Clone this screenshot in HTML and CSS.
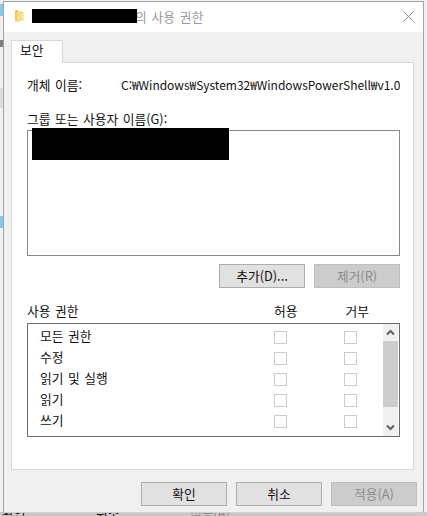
FILE: index.html
```html
<!DOCTYPE html>
<html lang="ko">
<head>
<meta charset="utf-8">
<title>사용 권한</title>
<link rel="stylesheet" href="styles.css">
</head>
<body>
<div class="desktop">
  <div class="behind behind-a"></div>
  <div class="behind behind-b"></div>
  <div class="behind behind-c"></div>
  <div class="behind behind-d"></div>
  <div class="behind-strip">
    <span class="bs bs-1">확인</span>
    <span class="bs bs-2">취소</span>
    <span class="bs bs-3">적용(A)</span>
  </div>
  <div class="window">
    <header class="titlebar">
      <svg class="folder" width="9" height="13" viewBox="0 0 9 13"><path d="M0 0h3l1 2h3v9H0z" fill="#f0c965"/><path d="M2 2.500l5-2v10l-5 2.500z" fill="#f8dc8e"/><path d="M7 2h2v9H7z" fill="#fbe8b0"/></svg>
      <span class="title-wrap"><span class="redact-title"></span><span class="title-text">의 사용 권한</span></span>
      <svg class="close" width="11" height="11" viewBox="0 0 11 11"><path d="M.5.500l10 10M10.500.500l-10 10" stroke="#8a8a8a" fill="none"/></svg>
    </header>
    <div class="body">
      <div class="tabs"><div class="tab">보안</div></div>
      <section class="panel">
        <div class="object-row">
          <span class="object-label">개체 이름:</span>
          <span class="object-path">C:₩Windows₩System32₩WindowsPowerShell₩v1.0</span>
        </div>
        <div class="group-label">그룹 또는 사용자 이름(G):</div>
        <div class="group-list"><div class="redact-user"></div></div>
        <div class="btn-row">
          <button class="btn">추가(D)...</button>
          <button class="btn disabled">제거(R)</button>
        </div>
        <div class="perm-head">
          <span class="perm-title">사용 권한</span>
          <span class="perm-col">허용</span>
          <span class="perm-col">거부</span>
        </div>
        <div class="perm-list">
          <div class="perm-rows">
            <div class="perm-row"><span class="perm-name">모든 권한</span><i class="check"></i><i class="check"></i></div>
            <div class="perm-row"><span class="perm-name">수정</span><i class="check"></i><i class="check"></i></div>
            <div class="perm-row"><span class="perm-name">읽기 및 실행</span><i class="check"></i><i class="check"></i></div>
            <div class="perm-row"><span class="perm-name">읽기</span><i class="check"></i><i class="check"></i></div>
            <div class="perm-row"><span class="perm-name">쓰기</span><i class="check"></i><i class="check"></i></div>
          </div>
          <div class="scrollbar">
            <div class="sb-btn"><svg width="9" height="7" viewBox="0 0 9 7"><path d="M1 5.500l3.500-3.500 3.500 3.500" stroke="#606060" stroke-width="2" fill="none"/></svg></div>
            <div class="sb-thumb"></div>
            <div class="sb-btn"><svg width="9" height="7" viewBox="0 0 9 7"><path d="M1 1.500l3.500 3.500 3.500-3.500" stroke="#606060" stroke-width="2" fill="none"/></svg></div>
          </div>
        </div>
      </section>
      <footer class="footer">
        <button class="btn">확인</button>
        <button class="btn">취소</button>
        <button class="btn disabled">적용(A)</button>
      </footer>
    </div>
  </div>
</div>
</body>
</html>
```

FILE: styles.css
```css
* { box-sizing: border-box; }
html, body { margin: 0; padding: 0; }
body {
  width: 427px;
  height: 516px;
  overflow: hidden;
  background: #f0f0f0;
  font-family: "Noto Sans CJK KR", "Noto Sans", sans-serif;
  font-size: 12.75px;
  word-spacing: 1px;
  color: #111;
}
.desktop {
  position: relative;
  width: 427px;
  height: 516px;
  overflow: hidden;
  padding: 1px 3px 0;
}
.behind { position: absolute; left: 0; width: 3px; }
.behind-a { top: 4px; height: 12px; background: #8cc6e8; }
.behind-b { top: 40px; height: 7px; background: #333; opacity: .6; }
.behind-c { top: 88px; height: 20px; background: #dcdcdc; }
.behind-d { top: 216px; height: 12px; background: #8cc6e8; }
.behind-strip {
  position: absolute;
  left: 0;
  bottom: 0;
  width: 427px;
  height: 4px;
  background: #c9c9c9;
  overflow: hidden;
}
.bs { position: absolute; top: -6px; font-size: 12.75px; line-height: 14px; }
.bs-1 { left: 2px; }
.bs-2 { left: 96px; }
.bs-3 { left: 190px; color: #8a8a8a; }
.window {
  position: relative;
  display: flex;
  flex-direction: column;
  width: 421px;
  height: 512px;
  background: #f0f0f0;
  border: 1px solid #a3a3a3;
  border-bottom-color: #d0d0d0;
}
.titlebar {
  display: flex;
  align-items: center;
  height: 30px;
  padding: 0 9px 2px 11px;
  background: #fff;
  flex: none;
}
.folder { flex: none; }
.title-wrap {
  display: flex;
  align-items: center;
  margin-left: 8px;
  flex: 1;
  color: #9a9a9a;
}
.redact-title { position: relative; z-index: 1; width: 105px; height: 14px; background: #000; }
.title-text { letter-spacing: .1px; margin-left: -2px; }
.close { flex: none; }
.body {
  flex: 1;
  display: flex;
  flex-direction: column;
  padding: 8px 9px 0 7px;
  background: #f0f0f0;
}
.tabs { display: flex; height: 23px; flex: none; position: relative; z-index: 1; }
.tab {
  width: 52px;
  height: 23px;
  padding: 1px 0 0 8px;
  line-height: 16px;
  background: #fff;
  border: 1px solid #d9d9d9;
  border-bottom: 0;
}
.panel {
  height: 408px;
  margin-top: -1px;
  padding: 14px 13px 0 15px;
  background: #fff;
  border: 1px solid #d9d9d9;
  flex: none;
}
.object-row { display: flex; height: 16px; line-height: 16px; white-space: nowrap; overflow: hidden; }
.object-label { width: 94px; flex: none; }
.object-path { font-size: 12px; letter-spacing: -.02px; }
.group-label { margin-top: 18px; height: 16px; line-height: 16px; }
.group-list {
  position: relative;
  height: 126px;
  margin-top: 3px;
  background: #fff;
  border: 1px solid #828790;
}
.redact-user {
  position: absolute;
  left: 4px;
  top: -3px;
  width: 197px;
  height: 32px;
  background: #000;
}
.btn {
  display: block;
  width: 86px;
  height: 24px;
  padding: 0;
  font: inherit;
  line-height: 20px;
  color: #111;
  background: #e1e1e1;
  border: 1px solid #adadad;
  border-radius: 0;
}
.btn.disabled { background: #cccccc; border-color: #bfbfbf; color: #8c8c8c; }
.btn-row { display: flex; justify-content: flex-end; gap: 9px; margin-top: 8px; }
.perm-head { display: flex; margin-top: 15px; height: 16px; line-height: 16px; }
.perm-title { width: 247px; flex: none; }
.perm-col { width: 71.500px; flex: none; }
.perm-list {
  display: flex;
  height: 114px;
  margin-top: 4px;
  background: #fff;
  border: 1px solid #6e6e6e;
}
.perm-rows { flex: 1; min-width: 0; padding: 3px 0 0 12px; }
.perm-row { display: flex; align-items: center; height: 21px; line-height: 16px; }
.perm-name { width: 234px; flex: none; margin-bottom: 3px; }
.check {
  display: block;
  width: 13px;
  height: 13px;
  margin-right: 57px;
  background: #fff;
  border: 1px solid #cccccc;
  flex: none;
}
.check:last-child { margin-right: 0; }
.scrollbar {
  width: 15px;
  margin-right: 1px;
  display: flex;
  flex-direction: column;
  background: #f0f0f0;
  flex: none;
}
.sb-btn { height: 17px; display: flex; align-items: center; justify-content: center; flex: none; }
.sb-thumb { height: 66px; background: #cdcdcd; flex: none; }
.scrollbar .sb-btn:last-child { margin-top: auto; }
.footer { display: flex; justify-content: flex-end; gap: 9px; margin-top: 12px; margin-right: -3px; }
```
